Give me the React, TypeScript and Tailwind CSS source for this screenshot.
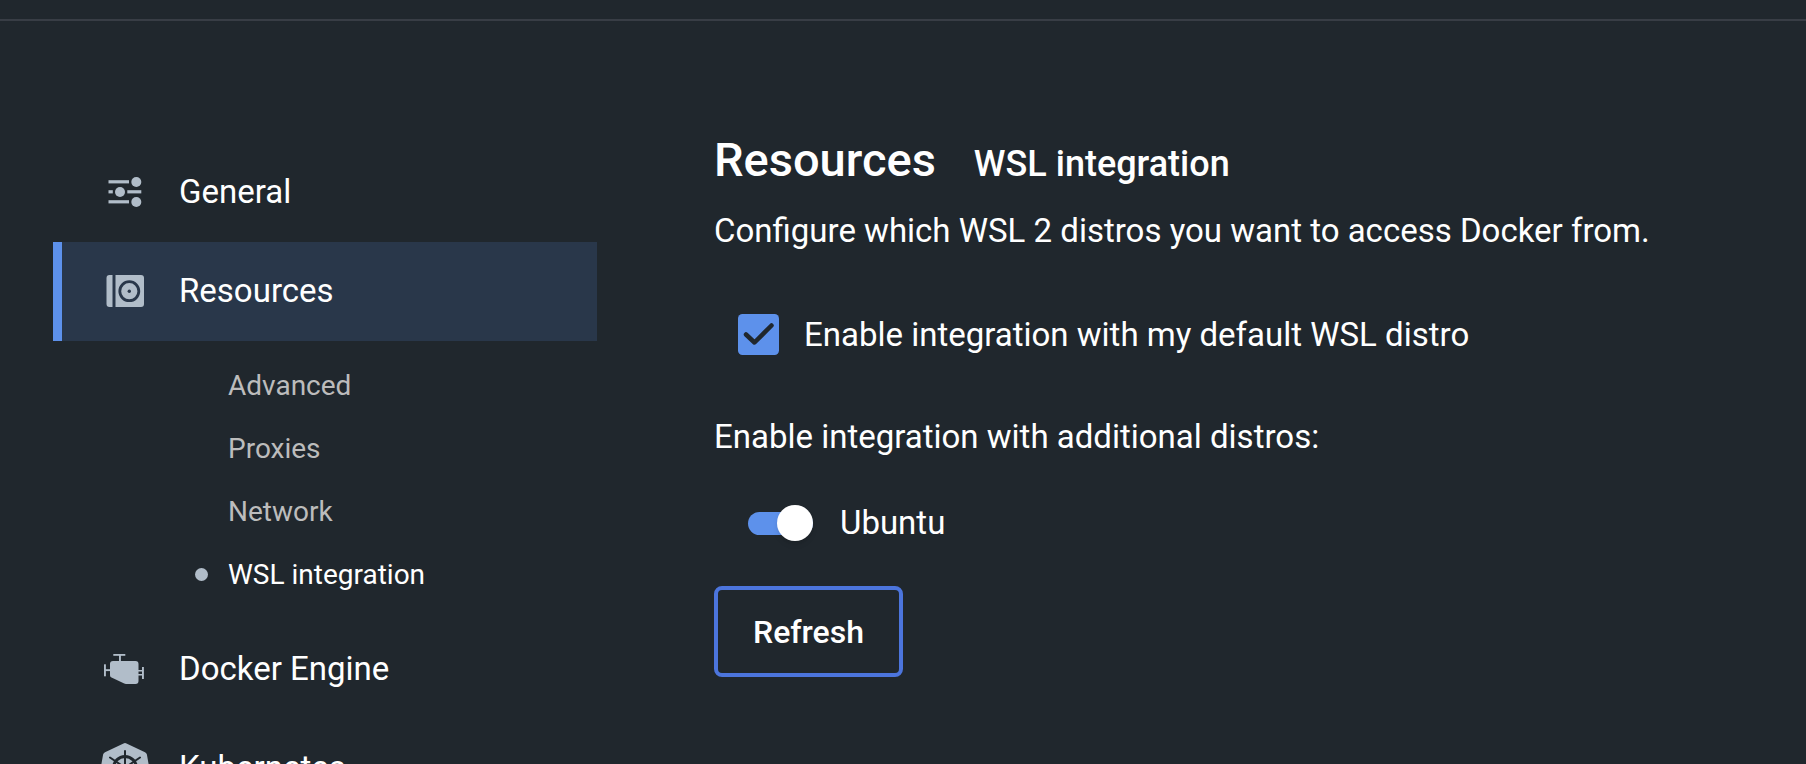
import type { ReactNode } from "react";

function GeneralIcon() {
  return (
    <svg width="34" height="30" viewBox="0 0 34 30" fill="#b1bdc9" aria-hidden="true">
      <rect x="0.500" y="3.200" width="20.500" height="3.200" />
      <circle cx="28.300" cy="5" r="5" />
      <rect x="0.500" y="13.200" width="4.300" height="3.200" />
      <circle cx="12" cy="15" r="5" />
      <rect x="19.300" y="13.200" width="14" height="3.200" />
      <rect x="0.500" y="23.200" width="20.500" height="3.200" />
      <circle cx="28.300" cy="25" r="5" />
    </svg>
  );
}

function ResourcesIcon() {
  return (
    <svg width="38" height="32" viewBox="0 0 38 32" fill="#b1bdc9" aria-hidden="true">
      <path d="M3.500 0h3v32h-3a3 3 0 0 1-3-3V3a3 3 0 0 1 3-3Z" />
      <path d="M9.500 0H35a3 3 0 0 1 3 3v26a3 3 0 0 1-3 3H9.500Z" />
      <circle cx="23.300" cy="16.200" r="9.500" fill="none" stroke="#29374a" strokeWidth="2.800" />
      <circle cx="23.300" cy="16.200" r="1.700" fill="#29374a" />
    </svg>
  );
}

function EngineIcon() {
  return (
    <svg width="42" height="30" viewBox="0 0 42 30" fill="#b1bdc9" aria-hidden="true">
      <path d="M9 7h22.500a3 3 0 0 1 3 3v17a3 3 0 0 1-3 3H22a4 4 0 0 1-1.800-.4L7.500 23.600A2.600 2.600 0 0 1 6 21.200V10a3 3 0 0 1 3-3Z" />
      <rect x="9.300" y="0" width="12" height="1.800" />
      <rect x="15" y="1" width="1.900" height="7" />
      <rect x="0" y="10.300" width="1.900" height="12" />
      <rect x="1" y="15.200" width="6" height="1.900" />
      <rect x="38" y="13" width="1.900" height="12" />
      <rect x="34" y="16" width="5" height="1.500" />
      <rect x="34" y="20" width="5" height="1.500" />
    </svg>
  );
}

function KubernetesIcon() {
  return (
    <svg width="50" height="49" viewBox="0 0 50 49" aria-hidden="true">
      <path
        fill="#b1bdc9"
        d="M23.500.4a3.500 3.500 0 0 1 3 0L45 9.200a3.500 3.500 0 0 1 1.900 2.300l3.100 17.500a3.500 3.500 0 0 1-.7 2.800L38.400 46.700a3.500 3.500 0 0 1-2.700 1.300H14.300a3.500 3.500 0 0 1-2.700-1.300L.7 31.800A3.500 3.500 0 0 1 0 29l3.100-17.500A3.500 3.500 0 0 1 5 9.200Z"
      />
      <g fill="none" stroke="#20272d" strokeWidth="2" strokeLinecap="round">
        <circle cx="25" cy="25" r="11.500" strokeWidth="3" />
        <path d="M25 8v14M10 14.500l12.700 8.600M40 14.500l-12.700 8.600M8.400 28.800l13.700-3.100M41.600 28.800l-13.700-3.100M17.600 40.300l6.100-12.600M32.400 40.300l-6.100-12.600" />
      </g>
      <circle cx="25" cy="25" r="3" fill="#20272d" />
    </svg>
  );
}

function NavItem({ icon, label, active = false }: { icon: ReactNode; label: string; active?: boolean }) {
  return (
    <a
      href="#"
      aria-current={active ? "true" : undefined}
      className={
        active
          ? "flex h-[99px] items-center border-l-[9px] border-[#5d91eb] bg-[#29374a] pb-0.5"
          : "flex h-[99px] items-center border-l-[9px] border-transparent pb-0.5"
      }
    >
      <span className="ml-9 flex w-[54px] justify-center">{icon}</span>
      <span className="ml-[27px]">{label}</span>
    </a>
  );
}

function SubItem({ label, active = false }: { label: string; active?: boolean }) {
  return (
    <a
      href="#"
      aria-current={active ? "page" : undefined}
      className={
        active
          ? "flex h-[63px] items-center gap-5 pl-[142px] text-[28px] text-white"
          : "flex h-[63px] items-center gap-5 pl-[142px] text-[28px] text-[#bcbcbc]"
      }
    >
      <span className={active ? "size-[13px] rounded-full bg-[#b1bdc9]" : "size-[13px]"} />
      {label}
    </a>
  );
}

export default function App() {
  return (
    <div className="flex h-screen flex-col overflow-hidden bg-[#20272d] font-['Roboto',sans-serif] text-[33px] leading-10 text-white">
      <header className="h-[21px] shrink-0 border-b-2 border-[#383d45]" />
      <div className="flex min-h-0 flex-1">
        <nav className="ml-[53px] w-[544px] shrink-0 pt-[122px]" aria-label="Settings">
          <NavItem icon={<GeneralIcon />} label="General" />
          <NavItem icon={<ResourcesIcon />} label="Resources" active />
          <div className="pt-[13px] pb-3.5">
            <SubItem label="Advanced" />
            <SubItem label="Proxies" />
            <SubItem label="Network" />
            <SubItem label="WSL integration" active />
          </div>
          <NavItem icon={<EngineIcon />} label="Docker Engine" />
          <NavItem icon={<KubernetesIcon />} label="Kubernetes" />
        </nav>
        <main className="flex min-w-0 flex-1 flex-col items-start pt-[107px] pl-[117px]">
          <div className="flex items-baseline gap-[38px]">
            <h1 className="text-[47px] leading-[64px] font-medium">Resources</h1>
            <h2 className="text-[36px] leading-[64px] font-medium">WSL integration</h2>
          </div>
          <p className="mt-[15px]">Configure which WSL 2 distros you want to access Docker from.</p>
          <label className="mt-[63px] ml-6 flex items-center">
            <input type="checkbox" defaultChecked className="peer sr-only" />
            <svg width="41" height="41" viewBox="0 0 41 41" aria-hidden="true">
              <rect width="41" height="41" rx="4.500" fill="#5d91eb" />
              <path d="M8 20.500l8.500 8L33.500 11.500" fill="none" stroke="#20272d" strokeWidth="4.500" strokeLinecap="round" strokeLinejoin="round" />
            </svg>
            <span className="ml-[25px]">Enable integration with my default WSL distro</span>
          </label>
          <p className="mt-[62px]">Enable integration with additional distros:</p>
          <label className="mt-[46px] ml-[34px] flex items-center">
            <input type="checkbox" role="switch" defaultChecked className="sr-only" />
            <span className="flex h-[23px] w-[65px] items-center justify-end rounded-full bg-[#5d91eb]">
              <span className="size-9 shrink-0 rounded-full bg-white shadow-md" />
            </span>
            <span className="ml-[27px]">Ubuntu</span>
          </label>
          <button type="button" className="mt-[43px] h-[91px] rounded-lg border-4 border-[#4c75dd] px-[35px] text-[32px] font-medium">
            Refresh
          </button>
        </main>
      </div>
    </div>
  );
}
